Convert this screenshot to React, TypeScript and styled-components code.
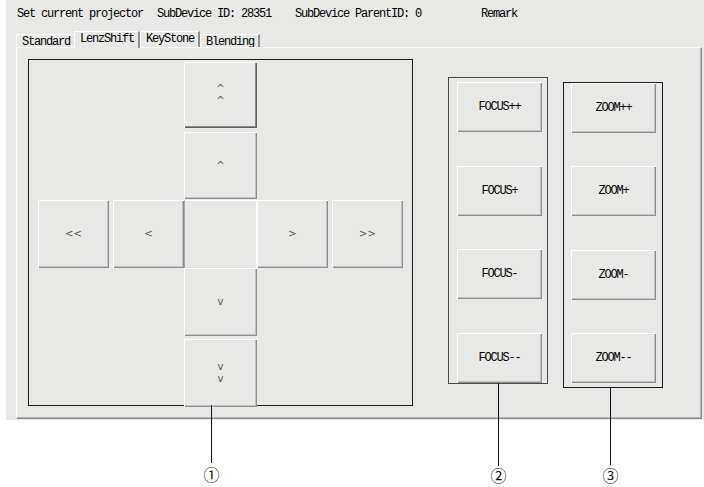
import React from "react";
import styled, { createGlobalStyle, css } from "styled-components";

const GRAY = "#e8e9e6";

const Global = createGlobalStyle`
  html, body { margin: 0; padding: 0; background: #fff; }
  body { width: 704px; height: 487px; overflow: hidden; }
`;

const sim = css`
  font-family: "Liberation Mono", "DejaVu Sans Mono", monospace;
  font-size: 12px;
  letter-spacing: -1.2px;
  line-height: 14px;
  color: #000;
  white-space: pre;
`;

const Page = styled.div`
  width: 704px;
  height: 487px;
  background: #fff;
  display: flex;
  align-items: flex-start;
`;

const Window = styled.div`
  margin-left: 6px;
  width: 698px;
  height: 420px;
  background: ${GRAY};
  display: flex;
  flex-direction: column;
`;

const Header = styled.div`
  ${sim}
  height: 31px;
  box-sizing: border-box;
  padding: 7px 0 0 11px;
  display: flex;
`;

const HeaderItem = styled.span<{ $gap: number }>`
  margin-left: ${(p) => p.$gap}px;
`;

const TabRow = styled.div`
  display: flex;
  align-items: flex-start;
  height: 17px;
  margin-left: 10px;
`;

const Tab = styled.div<{ $selected?: boolean; $raised?: boolean }>`
  ${sim}
  box-sizing: border-box;
  padding: 0 4px 0 5px;
  border-top: 1px solid #fdfdfd;
  border-left: 1px solid #fdfdfd;
  border-right: 2px solid #8e8e8e;
  background: ${GRAY};
  margin-top: ${(p) => (p.$selected || p.$raised ? 0 : 3)}px;
  height: ${(p) => (p.$selected ? 17 : p.$raised ? 16 : 13)}px;
  ${(p) =>
    p.$selected &&
    css`
      margin-left: -2px;
      position: relative;
      z-index: 1;
    `}
`;

const Panel = styled.div`
  margin: -1px 0 0 10px;
  width: 686px;
  height: 372px;
  box-sizing: border-box;
  border-top: 1px solid #fbfbfb;
  border-left: 1px solid #fbfbfb;
  border-right: 1px solid #8e8e8e;
  border-bottom: 1px solid #8e8e8e;
  box-shadow: inset -1px -1px 0 #b4b4b4;
  display: flex;
  align-items: flex-start;
  padding: 11px 0 0 11px;
`;

const Frame = styled.div<{ $w: number; $h: number; $mt: number; $ml: number; $color: string }>`
  position: relative;
  box-sizing: border-box;
  width: ${(p) => p.$w}px;
  height: ${(p) => p.$h}px;
  margin-top: ${(p) => p.$mt}px;
  margin-left: ${(p) => p.$ml}px;
  border: 1px solid ${(p) => p.$color};
`;

const DirGrid = styled.div`
  display: grid;
  box-sizing: border-box;
  padding: 2px 0 0 9px;
  grid-template-columns: 71px 4px 71px 73px 71px 4px 71px;
  grid-template-rows: 66px 4px 67px 1px 68px 68px 3px 68px;
`;

const ButtonColumn = styled.div<{ $pad: string }>`
  height: 100%;
  box-sizing: border-box;
  padding: ${(p) => p.$pad};
  display: flex;
  flex-direction: column;
  justify-content: space-between;
`;

const WinButton = styled.button<{ $default?: boolean; $col?: number; $row?: number }>`
  all: unset;
  box-sizing: border-box;
  background: ${GRAY};
  display: flex;
  align-items: center;
  justify-content: center;
  grid-column: ${(p) => p.$col ?? "auto"};
  grid-row: ${(p) => p.$row ?? "auto"};
  box-shadow: ${(p) =>
    p.$default
      ? "inset 1px 1px 0 #fff, inset -1px -1px 0 #5e5e5e, inset -2px -2px 0 #8c8c8c"
      : "inset 1px 1px 0 #fff, inset -1px -1px 0 #8e8e8e, inset -2px -2px 0 #c2c2c2"};
`;

const TextButton = styled(WinButton)`
  ${sim}
  width: 85px;
  height: 50px;
`;

const CenterCell = styled.div`
  grid-column: 4;
  grid-row: 5;
  box-sizing: border-box;
  border-left: 1px solid #a8a8a8;
  border-top: 1px solid #fff;
  border-right: 1px solid #fff;
`;

const ArrowLabel = styled.span`
  font-family: "DejaVu Sans", sans-serif;
  font-size: 10px;
  line-height: 12px;
  color: #555;
  display: flex;
  flex-direction: column;
  align-items: center;
`;

const Callout = styled.div<{ $left: number }>`
  position: absolute;
  top: 100%;
  left: ${(p) => p.$left}px;
  width: 21px;
  display: flex;
  flex-direction: column;
  align-items: center;
  z-index: 2;
  pointer-events: none;
`;

const CalloutLine = styled.div<{ $len: number }>`
  width: 1px;
  height: ${(p) => p.$len}px;
  background: #111;
`;

const CalloutNum = styled.span<{ $mt: number }>`
  font-family: "Noto Sans CJK SC", "DejaVu Sans", sans-serif;
  font-size: 16px;
  line-height: 16px;
  color: #111;
  margin-top: ${(p) => p.$mt}px;
`;

const Arrow = ({ lines }: { lines: string[] }) => (
  <ArrowLabel>
    {lines.map((l, i) => (
      <span key={i}>{l}</span>
    ))}
  </ArrowLabel>
);

export default function App() {
  return (
    <Page>
      <Global />
      <Window>
        <Header>
          <HeaderItem $gap={0}>Set current projector</HeaderItem>
          <HeaderItem $gap={14}>SubDevice ID: 28351</HeaderItem>
          <HeaderItem $gap={24}>SubDevice ParentID: 0</HeaderItem>
          <HeaderItem $gap={60}>Remark</HeaderItem>
        </Header>
        <TabRow>
          <Tab>Standard</Tab>
          <Tab $selected>LenzShift</Tab>
          <Tab $raised>KeyStone</Tab>
          <Tab>Blending</Tab>
        </TabRow>
        <Panel>
          <Frame $w={385} $h={347} $mt={0} $ml={0} $color="#1c1c1c">
            <DirGrid>
              <WinButton $default $col={4} $row={1}>
                <Arrow lines={["^", "^"]} />
              </WinButton>
              <WinButton $col={4} $row={3}>
                <Arrow lines={["^"]} />
              </WinButton>
              <WinButton $col={1} $row={5}>
                <Arrow lines={["<<"]} />
              </WinButton>
              <WinButton $col={3} $row={5}>
                <Arrow lines={["<"]} />
              </WinButton>
              <CenterCell />
              <WinButton $col={5} $row={5}>
                <Arrow lines={[">"]} />
              </WinButton>
              <WinButton $col={7} $row={5}>
                <Arrow lines={[">>"]} />
              </WinButton>
              <WinButton $col={4} $row={6}>
                <Arrow lines={["v"]} />
              </WinButton>
              <WinButton $col={4} $row={8}>
                <Arrow lines={["v", "v"]} />
              </WinButton>
            </DirGrid>
            <Callout $left={172}>
              <CalloutLine $len={58} />
              <CalloutNum $mt={3}>①</CalloutNum>
            </Callout>
          </Frame>
          <Frame $w={100} $h={307} $mt={18} $ml={35} $color="#4a4a4a">
            <ButtonColumn $pad="4px 0 0 8px">
              <TextButton>FOCUS++</TextButton>
              <TextButton>FOCUS+</TextButton>
              <TextButton>FOCUS-</TextButton>
              <TextButton>FOCUS--</TextButton>
            </ButtonColumn>
            <Callout $left={39}>
              <CalloutLine $len={83} />
              <CalloutNum $mt={1}>②</CalloutNum>
            </Callout>
          </Frame>
          <Frame $w={100} $h={306} $mt={23} $ml={15} $color="#1c1c1c">
            <ButtonColumn $pad="0 0 4px 7px">
              <TextButton>ZOOM++</TextButton>
              <TextButton>ZOOM+</TextButton>
              <TextButton>ZOOM-</TextButton>
              <TextButton>ZOOM--</TextButton>
            </ButtonColumn>
            <Callout $left={36}>
              <CalloutLine $len={78} />
              <CalloutNum $mt={2}>③</CalloutNum>
            </Callout>
          </Frame>
        </Panel>
      </Window>
    </Page>
  );
}
